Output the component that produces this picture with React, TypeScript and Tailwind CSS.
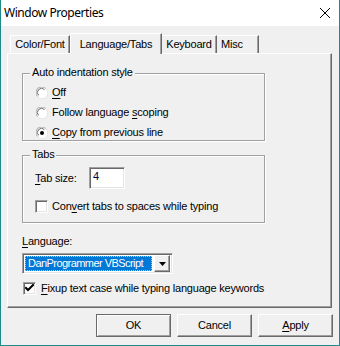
import React from "react";

const F = { fontFamily: '"Liberation Sans", Arial, sans-serif' };

function Radio({ checked }: { checked?: boolean }) {
  return (
    <svg width="12" height="12" viewBox="0 0 12 12" className="shrink-0">
      <circle cx="6" cy="6" r="5.5" fill="#ffffff" />
      <path d="M1.5 9.5 A5 5 0 0 1 9.5 1.5" fill="none" stroke="#a0a0a0" strokeWidth="1" />
      <path d="M2.6 8.4 A3.8 3.8 0 0 1 8.4 2.6" fill="none" stroke="#696969" strokeWidth="1" />
      <path d="M2.3 10.3 A5.3 5.3 0 0 0 10.3 2.3" fill="none" stroke="#e3e3e3" strokeWidth="1" />
      {checked && <circle cx="6" cy="6" r="2" fill="#000000" />}
    </svg>
  );
}

function Check({ checked }: { checked?: boolean }) {
  return (
    <div className="w-[13px] h-[13px] shrink-0 bg-white border border-t-[#a0a0a0] border-l-[#a0a0a0] border-r-white border-b-white shadow-[inset_1px_1px_0_#696969,inset_-1px_-1px_0_#e3e3e3] flex items-center justify-center">
      {checked && (
        <svg width="9" height="9" viewBox="0 0 9 9">
          <path d="M1 4 L3 6 L8 1" fill="none" stroke="#000" strokeWidth="2" strokeLinecap="square" />
        </svg>
      )}
    </div>
  );
}

function U({ children }: { children: React.ReactNode }) {
  return <span className="underline underline-offset-[2px]">{children}</span>;
}

function Group({ label, className, children }: { label: string; className?: string; children: React.ReactNode }) {
  return (
    <div className={"relative border border-[#a0a0a0] shadow-[inset_1px_1px_0_#ffffff,1px_1px_0_#ffffff] " + (className ?? "")}>
      <span className="absolute -top-[8px] left-[7px] bg-[#f0f0f0] px-[2px] leading-[13px]">{label}</span>
      {children}
    </div>
  );
}

function Button({ children, def }: { children: React.ReactNode; def?: boolean }) {
  return (
    <div
      className={
        "w-[75px] h-[23px] flex items-center justify-center bg-[#f0f0f0] " +
        (def
          ? "border border-[#696969] shadow-[inset_1px_1px_0_#ffffff,inset_-1px_-1px_0_#a0a0a0]"
          : "border border-t-white border-l-white border-r-[#696969] border-b-[#696969] shadow-[inset_-1px_-1px_0_#a0a0a0]")
      }
    >
      {children}
    </div>
  );
}

export default function App() {
  return (
    <div className="w-[340px] h-[346px] flex flex-col border-x border-b border-[#1f8a8c] text-[11px] tracking-[-0.2px] text-black bg-[#f0f0f0]" style={F}>
      <div className="h-[26px] bg-white flex items-center justify-between pl-[3px] pr-[8px] shrink-0">
        <span className="text-[12px] tracking-[-0.45px]" style={{ fontFamily: '"Noto Sans", "Open Sans", sans-serif' }}>
          Window Properties
        </span>
        <svg width="12" height="12" viewBox="0 0 12 12">
          <path d="M1 1 L11 11 M11 1 L1 11" stroke="#000" strokeWidth="1" />
        </svg>
      </div>
      <div className="flex-1 flex flex-col px-[6px] pt-[7px]">
        {/* tabs */}
        <div className="flex items-end h-[20px] pl-[3px] relative z-10">
          <div className="w-[60px] h-[18px] border-t border-l border-t-white border-l-white border-r border-r-[#696969] shadow-[inset_-1px_0_0_#a0a0a0] flex items-center justify-center">
            Color/Font
          </div>
          <div className="w-[92px] h-[21px] -mb-px bg-[#f0f0f0] border-t border-l border-t-white border-l-white border-r border-r-[#696969] shadow-[inset_-1px_0_0_#a0a0a0] flex items-start justify-center pt-[2px]">
            Language/Tabs
          </div>
          <div className="w-[55px] h-[18px] border-t border-t-white border-r border-r-[#696969] shadow-[inset_-1px_0_0_#a0a0a0] flex items-center justify-center">
            Keyboard
          </div>
          <div className="w-[42px] h-[18px] border-t border-t-white border-r border-r-[#696969] shadow-[inset_-1px_0_0_#a0a0a0] flex items-center justify-start pl-[4px]">
            Misc
          </div>
        </div>
        {/* panel */}
        <div className="w-[325px] h-[255px] border border-t-white border-l-white border-r-[#696969] border-b-[#696969] shadow-[inset_-1px_-1px_0_#a0a0a0] flex flex-col pl-[14px] pt-[19px]">
          <Group label="Auto indentation style" className="w-[243px] h-[68px] shrink-0">
            <div className="flex flex-col pl-[13px] pt-[12px] gap-[7px]">
              <div className="flex items-center gap-[4px] h-[13px]">
                <Radio />
                <span><U>O</U>ff</span>
              </div>
              <div className="flex items-center gap-[4px] h-[13px]">
                <Radio />
                <span>Follow language <U>s</U>coping</span>
              </div>
              <div className="flex items-center gap-[4px] h-[13px]">
                <Radio checked />
                <span><U>C</U>opy from previous line</span>
              </div>
            </div>
          </Group>
          <Group label="Tabs" className="w-[243px] h-[68px] shrink-0 mt-[14px]">
            <div className="flex flex-col pl-[12px] pt-[11px]">
              <div className="flex items-center h-[22px]">
                <span className="w-[54px]"><U>T</U>ab size:</span>
                <div className="w-[36px] h-[22px] bg-white border border-t-[#a0a0a0] border-l-[#a0a0a0] border-r-white border-b-white shadow-[inset_1px_1px_0_#696969,inset_-1px_-1px_0_#e3e3e3] pl-[3px] pt-[2px] leading-[13px] text-[#000040]">
                  4
                </div>
              </div>
              <div className="flex items-center gap-[4px] mt-[11px] h-[13px]">
                <Check />
                <span>Con<U>v</U>ert tabs to spaces while typing</span>
              </div>
            </div>
          </Group>
          <div className="mt-[12px] leading-[13px]"><U>L</U>anguage:</div>
          <div className="mt-[5px] w-[151px] h-[21px] bg-white border border-t-[#a0a0a0] border-l-[#a0a0a0] border-r-white border-b-white shadow-[inset_1px_1px_0_#696969,inset_-1px_-1px_0_#e3e3e3] flex items-center p-[2px]">
            <div className="flex-1 min-w-0 h-[15px] bg-[#0078d7] text-white border border-dotted border-[#f0c080] flex items-center pl-[2px] leading-[13px] whitespace-nowrap overflow-hidden tracking-[-0.55px]">
              DanProgrammer VBScript
            </div>
            <div className="w-[16px] h-[17px] ml-[2px] shrink-0 bg-[#f0f0f0] border border-t-white border-l-white border-r-[#696969] border-b-[#696969] shadow-[inset_-1px_-1px_0_#a0a0a0] flex items-center justify-center">
              <svg width="7" height="4" viewBox="0 0 7 4">
                <path d="M0 0 H7 L3.5 4 Z" fill="#000" />
              </svg>
            </div>
          </div>
          <div className="flex items-center gap-[5px] mt-[8px] h-[13px] pl-[1px]">
            <Check checked />
            <span><U>F</U>ixup text case while typing language keywords</span>
          </div>
        </div>
        {/* buttons */}
        <div className="flex justify-end gap-[6px] mt-[6px] pr-[0px]">
          <Button def>OK</Button>
          <Button>Cancel</Button>
          <Button><U>A</U>pply</Button>
        </div>
      </div>
    </div>
  );
}
